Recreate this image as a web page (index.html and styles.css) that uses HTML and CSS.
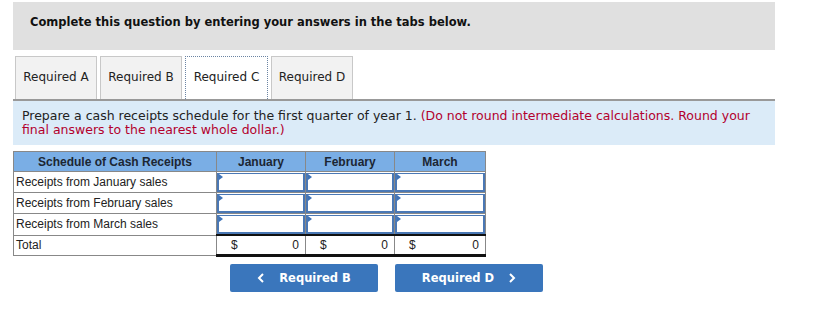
FILE: index.html
```html
<!DOCTYPE html>
<html lang="en">
<head>
    <meta charset="UTF-8">
    <title>Cash Receipts Schedule</title>
    <link rel="stylesheet" href="styles.css">
</head>
<body>
    <div class="page">
        <div class="instructions">Complete this question by entering your answers in the tabs below.</div>

        <ul class="tabs">
            <li class="tab">Required A</li>
            <li class="tab">Required B</li>
            <li class="tab active">Required C</li>
            <li class="tab">Required D</li>
        </ul>

        <div class="prompt">
            Prepare a cash receipts schedule for the first quarter of year 1. <span class="note">(Do not round intermediate calculations. Round your final answers to the nearest whole dollar.)</span>
        </div>

        <table class="schedule">
            <thead>
                <tr>
                    <th class="col-label">Schedule of Cash Receipts</th>
                    <th class="col-month">January</th>
                    <th class="col-month">February</th>
                    <th class="col-last">March</th>
                </tr>
            </thead>
            <tbody>
                <tr>
                    <td class="label">Receipts from January sales</td>
                    <td class="entry"><input type="text"></td>
                    <td class="entry"><input type="text"></td>
                    <td class="entry"><input type="text"></td>
                </tr>
                <tr>
                    <td class="label">Receipts from February sales</td>
                    <td class="entry"><input type="text"></td>
                    <td class="entry"><input type="text"></td>
                    <td class="entry"><input type="text"></td>
                </tr>
                <tr>
                    <td class="label">Receipts from March sales</td>
                    <td class="entry"><input type="text"></td>
                    <td class="entry"><input type="text"></td>
                    <td class="entry"><input type="text"></td>
                </tr>
                <tr class="total">
                    <td class="label">Total</td>
                    <td class="amount"><span>$</span><span>0</span></td>
                    <td class="amount"><span>$</span><span>0</span></td>
                    <td class="amount"><span>$</span><span>0</span></td>
                </tr>
            </tbody>
        </table>

        <div class="nav">
            <a href="#" class="nav-btn">
                <svg width="8" height="10" viewBox="0 0 8 10"><path d="M6 1 L2 5 L6 9" fill="none" stroke="#fff" stroke-width="2"/></svg>
                <span>Required B</span>
            </a>
            <a href="#" class="nav-btn">
                <span>Required D</span>
                <svg width="8" height="10" viewBox="0 0 8 10"><path d="M2 1 L6 5 L2 9" fill="none" stroke="#fff" stroke-width="2"/></svg>
            </a>
        </div>
    </div>
</body>
</html>
```

FILE: styles.css
```css
* {
    margin: 0;
    padding: 0;
    box-sizing: border-box;
}

body {
    font-family: 'DejaVu Sans', Verdana, sans-serif;
    font-size: 12px;
    color: #222;
    background: #fff;
}

.page {
    width: 775px;
    padding: 2px 0 0 13px;
}

.instructions {
    background: #e0e0e0;
    height: 48px;
    padding: 13px 0 0 17px;
    font-weight: bold;
    font-size: 11.5px;
    color: #111;
}

.tabs {
    display: flex;
    list-style: none;
    gap: 3px;
    margin-top: 6px;
    padding-left: 2px;
}

.tab {
    width: 82px;
    height: 43px;
    line-height: 41px;
    text-align: center;
    background: #f2f2f2;
    border: 1px solid #c8c8c8;
    border-bottom: none;
    color: #222;
}

.tab.active {
    background: #fff;
    border: 1px dotted #6b84a3;
    border-bottom: none;
    width: 83px;
}

.prompt {
    background: #dbebf8;
    border-top: 2px solid #999;
    height: 46px;
    padding: 8px 9px 0;
    line-height: 14px;
    font-size: 12.5px;
    color: #222;
}

.note {
    color: #b3002d;
}

.schedule {
    margin-top: 6px;
    border-collapse: collapse;
    table-layout: fixed;
    width: 472px;
    font-family: 'Liberation Sans', Arial, sans-serif;
    font-size: 12px;
    color: #222;
}

.schedule th {
    background: #7aaee5;
    border: 1px solid #888;
    height: 20px;
    font-weight: bold;
    color: #1c2633;
}

.schedule .col-label {
    width: 203px;
}

.schedule .col-month {
    width: 89px;
}

.schedule .col-last {
    width: 91px;
}

.schedule td {
    border: 1px solid #888;
    height: 20px;
}

.schedule td.label {
    padding-left: 2px;
}

.schedule td.entry {
    padding: 1px 0 0;
    position: relative;
}

.schedule td.entry input {
    display: block;
    width: 100%;
    height: 19px;
    border: 2px solid #4a78b5;
    border-top-width: 1px;
    outline: none;
    background: #fff;
}

.schedule td.entry::before {
    content: '';
    position: absolute;
    left: 2px;
    top: 2px;
    border-left: 4px solid #3f74b8;
    border-top: 3px solid transparent;
    border-bottom: 3px solid transparent;
}

.total td.amount {
    border-top: 2px solid #111;
    border-bottom: 3px solid #111;
    padding: 0 6px 0 14px;
}

.total td.amount span:last-child {
    float: right;
}

.nav {
    display: flex;
    gap: 17px;
    margin: 7px 0 0 217px;
}

.nav-btn {
    display: flex;
    align-items: center;
    justify-content: center;
    gap: 14px;
    width: 148px;
    height: 28px;
    background: #3a76bc;
    border-radius: 2px;
    color: #fff;
    font-weight: bold;
    font-size: 11.5px;
    text-decoration: none;
}
```
